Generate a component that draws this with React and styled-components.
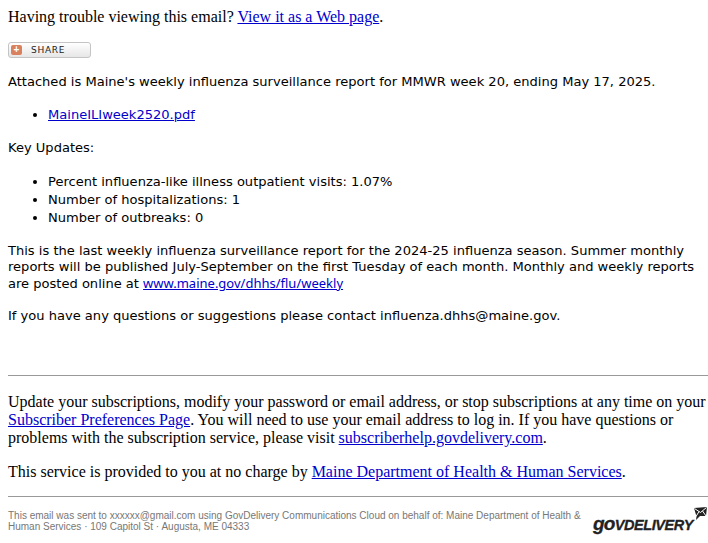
import React from "react";
import styled, { createGlobalStyle } from "styled-components";

const GlobalStyle = createGlobalStyle`
  html, body {
    margin: 0;
    background: #fff;
  }
  body {
    padding: 8px 0 0 8px;
    width: 708px;
    box-sizing: border-box;
    overflow: hidden;
    color: #000;
    font-family: "Liberation Serif", "Times New Roman", serif;
    font-size: 16px;
    line-height: 18px;
  }
  a {
    color: #0000cc;
  }
`;

const Banner = styled.div`
  height: 18px;
`;

const ShareButton = styled.a`
  display: flex;
  align-items: center;
  box-sizing: border-box;
  width: 83px;
  height: 16px;
  margin-top: 16px;
  padding-left: 2px;
  border: 1px solid #c4c4c4;
  border-radius: 3px;
  background: linear-gradient(#ffffff, #e6e6e6);
`;

const ShareIcon = styled.span`
  display: flex;
  align-items: center;
  justify-content: center;
  width: 11px;
  height: 10px;
  border-radius: 2px;
  background: #d9805f;
  color: #fff;
  font: bold 10px/10px "Liberation Sans", Arial, sans-serif;
`;

const ShareLabel = styled.span`
  margin-left: 9px;
  color: #222;
  font: 9px/10px "DejaVu Sans", Verdana, sans-serif;
  letter-spacing: 0.7px;
`;

const Body = styled.div`
  margin-top: 16px;
  font-family: "DejaVu Sans", Verdana, sans-serif;
  font-size: 13.06px;
  line-height: 16.3px;
`;

const Para = styled.p`
  margin: 0 0 16px;
`;

const List = styled.ul`
  margin: 0 0 16px;
  padding-left: 40px;
`;

const Item = styled.li`
  line-height: 18px;
`;

const WebLink = styled.a`
  font-family: "Noto Sans", Tahoma, sans-serif;
  font-size: 13px;
`;

const Rule = styled.hr`
  height: 0;
  margin: 0;
  border: 0;
  border-top: 1px solid #999;
`;

const TopRule = styled(Rule)`
  margin-top: 50px;
`;

const Notice = styled.div`
  margin-top: 17px;
`;

const Service = styled.p`
  margin: 16px 0 15px;
`;

const Footer = styled.div`
  display: flex;
  justify-content: space-between;
  margin-top: 13px;
`;

const FooterText = styled.div`
  width: 580px;
  color: #777;
  font-family: "Liberation Sans", Arial, sans-serif;
  font-size: 10px;
  line-height: 11px;
`;

const Logo = styled.div`
  position: relative;
  flex: none;
  width: 115px;
  height: 30px;
`;

const LogoText = styled.span`
  position: absolute;
  left: 0;
  top: 4px;
  color: #222;
  font: italic bold 14.5px/20px "Liberation Sans", Arial, sans-serif;
  letter-spacing: -0.4px;
  -webkit-text-stroke: 0.3px #222;
`;

const LogoLead = styled.span`
  font-size: 19px;
  letter-spacing: -0.8px;
`;

const LogoMail = styled.svg`
  position: absolute;
  right: 0;
  top: -3px;
`;

export default function App() {
  return (
    <>
      <GlobalStyle />
      <Banner>
        Having trouble viewing this email? <a href="#web">View it as a Web page</a>.
      </Banner>
      <ShareButton>
        <ShareIcon>+</ShareIcon>
        <ShareLabel>SHARE</ShareLabel>
      </ShareButton>
      <Body>
        <Para>Attached is Maine's weekly influenza surveillance report for MMWR week 20, ending May 17, 2025.</Para>
        <List>
          <Item><a href="#pdf">MaineILIweek2520.pdf</a></Item>
        </List>
        <Para>Key Updates:</Para>
        <List>
          <Item>Percent influenza-like illness outpatient visits: 1.07%</Item>
          <Item>Number of hospitalizations: 1</Item>
          <Item>Number of outbreaks: 0</Item>
        </List>
        <Para>
          This is the last weekly influenza surveillance report for the 2024-25 influenza season. Summer monthly
          reports will be published July-September on the first Tuesday of each month. Monthly and weekly reports
          are posted online at <WebLink href="#flu">www.maine.gov/dhhs/flu/weekly</WebLink>
        </Para>
        <Para>If you have any questions or suggestions please contact influenza.dhhs@maine.gov.</Para>
      </Body>
      <TopRule />
      <Notice>
        Update your subscriptions, modify your password or email address, or stop subscriptions at any time on your{" "}
        <a href="#prefs">Subscriber Preferences Page</a>. You will need to use your email address to log in. If you have
        questions or problems with the subscription service, please visit{" "}
        <a href="#help">subscriberhelp.govdelivery.com</a>.
      </Notice>
      <Service>
        This service is provided to you at no charge by <a href="#dhhs">Maine Department of Health &amp; Human Services</a>.
      </Service>
      <Rule />
      <Footer>
        <FooterText>
          This email was sent to xxxxxx@gmail.com using GovDelivery Communications Cloud on behalf of: Maine Department of
          Health &amp; Human Services · 109 Capitol St · Augusta, ME 04333
        </FooterText>
        <Logo>
          <LogoText><LogoLead>go</LogoLead>VDELIVERY</LogoText>
          <LogoMail width="15" height="14" viewBox="0 0 15 14">
            <path d="M1 1 L14 0 L13 9 L7 9 L3 13 L3.5 9.5 Z" fill="#222" />
            <path d="M1.5 1.5 L7.5 5.5 L13.5 0.5 M3 9.5 L6 4.5 M13 9 L9.5 4" stroke="#fff" strokeWidth="1" fill="none" />
          </LogoMail>
        </Logo>
      </Footer>
    </>
  );
}
